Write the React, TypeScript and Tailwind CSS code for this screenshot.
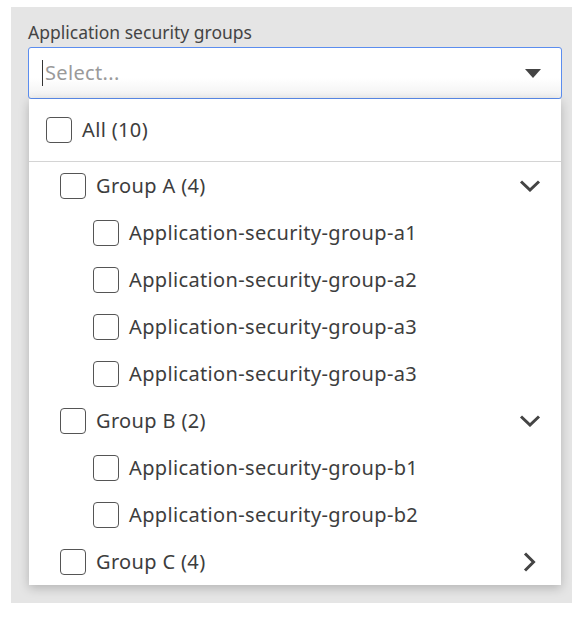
import React from 'react';

type Item = { label: string; level: 0 | 1; chevron?: 'down' | 'right' };

const items: Item[] = [
  { label: 'Group A (4)', level: 0, chevron: 'down' },
  { label: 'Application-security-group-a1', level: 1 },
  { label: 'Application-security-group-a2', level: 1 },
  { label: 'Application-security-group-a3', level: 1 },
  { label: 'Application-security-group-a3', level: 1 },
  { label: 'Group B (2)', level: 0, chevron: 'down' },
  { label: 'Application-security-group-b1', level: 1 },
  { label: 'Application-security-group-b2', level: 1 },
  { label: 'Group C (4)', level: 0, chevron: 'right' },
];

export default function App() {
  return (
    <div className="min-h-screen bg-white pt-[7px] pl-[11px]" style={{ fontFamily: '"Noto Sans", Lato, sans-serif' }}>
      <div className="w-[561px] h-[596px] bg-[#e5e5e5] pl-[17px] pr-[10px] pt-[13px]">
        <label className="block text-[17.5px] leading-[25px] text-[#444] mb-[2px]">Application security groups</label>
        <div className="h-[52px] w-[534px] rounded-[3px] border-[1.5px] border-[#5b8def] bg-gradient-to-b from-white from-60% to-[#f1f1f1] flex items-center pl-[13px] pr-[20px]">
          <span className="w-px h-[26px] bg-[#333]" />
          <span className="ml-[2px] flex-1 text-[20px] tracking-[0.35px] text-[#9a9a9a]">Select...</span>
          <svg width="16" height="9" viewBox="0 0 16 9"><path d="M0 0H16L8 9Z" fill="#444" /></svg>
        </div>
        <div className="w-[532px] ml-[1px] bg-white shadow-[0_3px_10px_rgba(0,0,0,0.22)] text-[20px] tracking-[0.35px] text-[#3d3d3d]">
          <div className="h-[63px] flex items-center pl-[17px] border-b border-[#d4d4d4]">
            <Checkbox />
            <span className="ml-[10px]">All (10)</span>
          </div>
          {items.map((it, i) => (
            <div key={i} className={`h-[47px] flex items-center pr-[20px] ${it.level === 0 ? 'pl-[31px]' : 'pl-[64px]'}`}>
              <Checkbox />
              <span className="ml-[10px] flex-1">{it.label}</span>
              {it.chevron === 'down' && (
                <svg width="22" height="12" viewBox="0 0 22 12"><path d="M2 1.5L11 10L20 1.5" fill="none" stroke="#444" strokeWidth="3" /></svg>
              )}
              {it.chevron === 'right' && (
                <svg width="22" height="20" viewBox="0 0 22 20"><path d="M6 1.5L14.5 10L6 18.5" fill="none" stroke="#444" strokeWidth="3" /></svg>
              )}
            </div>
          ))}
        </div>
      </div>
    </div>
  );
}

function Checkbox() {
  return <span className="w-[26px] h-[26px] shrink-0 rounded-[4px] border-[1.5px] border-[#555] bg-white" />;
}
